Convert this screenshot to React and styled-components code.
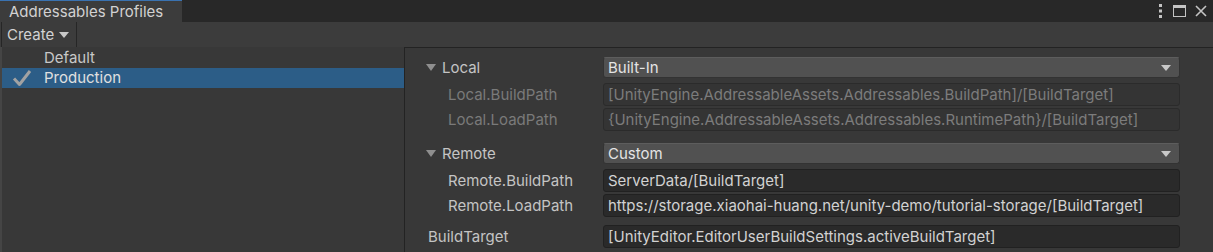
import React from 'react'
import styled, { createGlobalStyle } from 'styled-components'

const GlobalStyle = createGlobalStyle`
  html, body {
    margin: 0;
    padding: 0;
    background: #383838;
    overflow: hidden;
  }
  body {
    font-family: Inter, 'Noto Sans', sans-serif;
    font-size: 15px;
    line-height: 18px;
    color: #c4c4c4;
  }
`

const Window = styled.div`
  width: 1213px;
  height: 252px;
  display: flex;
  flex-direction: column;
  background: #383838;
`

const TabBar = styled.div`
  height: 22px;
  display: flex;
  align-items: stretch;
  background: #282828;
`

const Tab = styled.div`
  width: 182px;
  box-sizing: border-box;
  padding-left: 9px;
  display: flex;
  align-items: center;
  background: #3c3c3c;
  border-top: 1px solid #3a72b0;
  color: #d2d2d2;
`

const WindowButtons = styled.div`
  margin-left: auto;
  display: flex;
  align-items: center;
  gap: 9px;
  padding-right: 6px;
  color: #c4c4c4;
`

const Toolbar = styled.div`
  height: 25px;
  display: flex;
  align-items: stretch;
  background: #3c3c3c;
`

const ToolbarButton = styled.div`
  display: flex;
  align-items: center;
  gap: 5px;
  padding: 0 7px 0 5px;
  border-left: 1px solid #262626;
  border-right: 1px solid #262626;
  margin-left: 1px;
  color: #d2d2d2;
`

const Body = styled.div`
  flex: 1;
  display: flex;
  min-height: 0;
`

const List = styled.div`
  width: 404px;
  padding-top: 1px;
  box-sizing: border-box;
  border-left: 2px solid #454545;
  background: #383838;
`

const ListItem = styled.div`
  height: 20px;
  display: flex;
  align-items: center;
  position: relative;
  padding-left: 42px;
  background: ${p => (p.selected ? '#2c5d87' : 'transparent')};
  color: ${p => (p.selected ? '#e0e0e0' : '#c8c8c8')};
`

const Check = styled.svg`
  position: absolute;
  left: 10px;
  top: 1px;
`

const Panel = styled.div`
  flex: 1;
  border-left: 1px solid #232323;
  border-top: 1px solid #232323;
  padding: 9px 33px 0 23px;
  background: #383838;
`

const Section = styled.div`
  display: flex;
  flex-direction: column;
  margin-bottom: ${p => p.gapAfter || 0}px;
`

const Row = styled.div`
  display: flex;
  align-items: center;
  height: ${p => (p.dropdown ? 21 : 23)}px;
  margin-bottom: ${p => (p.dropdown ? 5 : 2)}px;
`

const Label = styled.div`
  width: ${p => 175 - (p.indent || 0)}px;
  padding-left: ${p => p.indent || 0}px;
  padding-top: 1px;
  display: flex;
  align-items: center;
  gap: 6px;
  color: ${p => (p.disabled ? '#7a7a7a' : '#c4c4c4')};
  white-space: nowrap;
`

const FoldArrow = styled.span`
  width: 0;
  height: 0;
  margin-left: -2px;
  margin-top: -1px;
  border-left: 5px solid transparent;
  border-right: 5px solid transparent;
  border-top: 7px solid #8f8f8f;
`

const Dropdown = styled.div`
  flex: 1;
  height: 21px;
  box-sizing: border-box;
  display: flex;
  align-items: center;
  padding: 0 8px 0 4px;
  border-radius: 3px;
  background: #515151;
  border: 1px solid #333333;
  border-top-color: #5d5d5d;
  color: #e4e4e4;
`

const DropArrow = styled.span`
  margin-left: auto;
  width: 0;
  height: 0;
  border-left: 5px solid transparent;
  border-right: 5px solid transparent;
  border-top: 6px solid #c8c8c8;
`

const Field = styled.div`
  flex: 1;
  height: 23px;
  box-sizing: border-box;
  display: flex;
  align-items: center;
  padding: 1px 4px 0;
  border-radius: 3px;
  background: ${p => (p.disabled ? '#343434' : '#2a2a2a')};
  border: 1px solid ${p => (p.disabled ? '#2b2b2b' : '#212121')};
  color: ${p => (p.disabled ? '#7c7c7c' : '#d2d2d2')};
  white-space: nowrap;
  overflow: hidden;
`

const Kebab = () => (
  <svg width="6" height="14" viewBox="0 0 6 14">
    <rect x="1" y="0" width="3" height="3" fill="#c4c4c4" />
    <rect x="1" y="5.5" width="3" height="3" fill="#c4c4c4" />
    <rect x="1" y="11" width="3" height="3" fill="#c4c4c4" />
  </svg>
)

const Maximize = () => (
  <svg width="13" height="12" viewBox="0 0 13 12">
    <rect x="0.5" y="0.5" width="12" height="11" fill="none" stroke="#c4c4c4" />
    <rect x="0" y="0" width="13" height="3" fill="#c4c4c4" />
  </svg>
)

const Close = () => (
  <svg width="12" height="12" viewBox="0 0 12 12">
    <path d="M1 1 L11 11 M11 1 L1 11" stroke="#c4c4c4" strokeWidth="1.6" />
  </svg>
)

const CreateArrow = styled.span`
  width: 0;
  height: 0;
  border-left: 5px solid transparent;
  border-right: 5px solid transparent;
  border-top: 6px solid #c8c8c8;
`

const Foldout = ({ label, value, gapAfter, children }) => (
  <Section gapAfter={gapAfter}>
    <Row dropdown>
      <Label>
        <FoldArrow />
        {label}
      </Label>
      <Dropdown>
        {value}
        <DropArrow />
      </Dropdown>
    </Row>
    {children}
  </Section>
)

const PathRow = ({ label, value, disabled, indent = 20 }) => (
  <Row>
    <Label indent={indent} disabled={disabled}>{label}</Label>
    <Field disabled={disabled}>{value}</Field>
  </Row>
)

export default function App () {
  return (
    <Window>
      <GlobalStyle />
      <TabBar>
        <Tab>Addressables Profiles</Tab>
        <WindowButtons>
          <Kebab />
          <Maximize />
          <Close />
        </WindowButtons>
      </TabBar>
      <Toolbar>
        <ToolbarButton>
          Create
          <CreateArrow />
        </ToolbarButton>
      </Toolbar>
      <Body>
        <List>
          <ListItem>Default</ListItem>
          <ListItem selected>
            <Check width="20" height="18" viewBox="0 0 20 18">
              <path d="M2 9.5 L7.5 15.5 L18 2" fill="none" stroke="#a2a2a2" strokeWidth="3" strokeLinejoin="round" />
            </Check>
            Production
          </ListItem>
        </List>
        <Panel>
          <Foldout label="Local" value="Built-In" gapAfter={10}>
            <PathRow disabled label="Local.BuildPath" value="[UnityEngine.AddressableAssets.Addressables.BuildPath]/[BuildTarget]" />
            <PathRow disabled label="Local.LoadPath" value="{UnityEngine.AddressableAssets.Addressables.RuntimePath}/[BuildTarget]" />
          </Foldout>
          <Foldout label="Remote" value="Custom" gapAfter={6}>
            <PathRow label="Remote.BuildPath" value="ServerData/[BuildTarget]" />
            <PathRow label="Remote.LoadPath" value="https://storage.xiaohai-huang.net/unity-demo/tutorial-storage/[BuildTarget]" />
          </Foldout>
          <PathRow indent={0} label="BuildTarget" value="[UnityEditor.EditorUserBuildSettings.activeBuildTarget]" />
        </Panel>
      </Body>
    </Window>
  )
}
